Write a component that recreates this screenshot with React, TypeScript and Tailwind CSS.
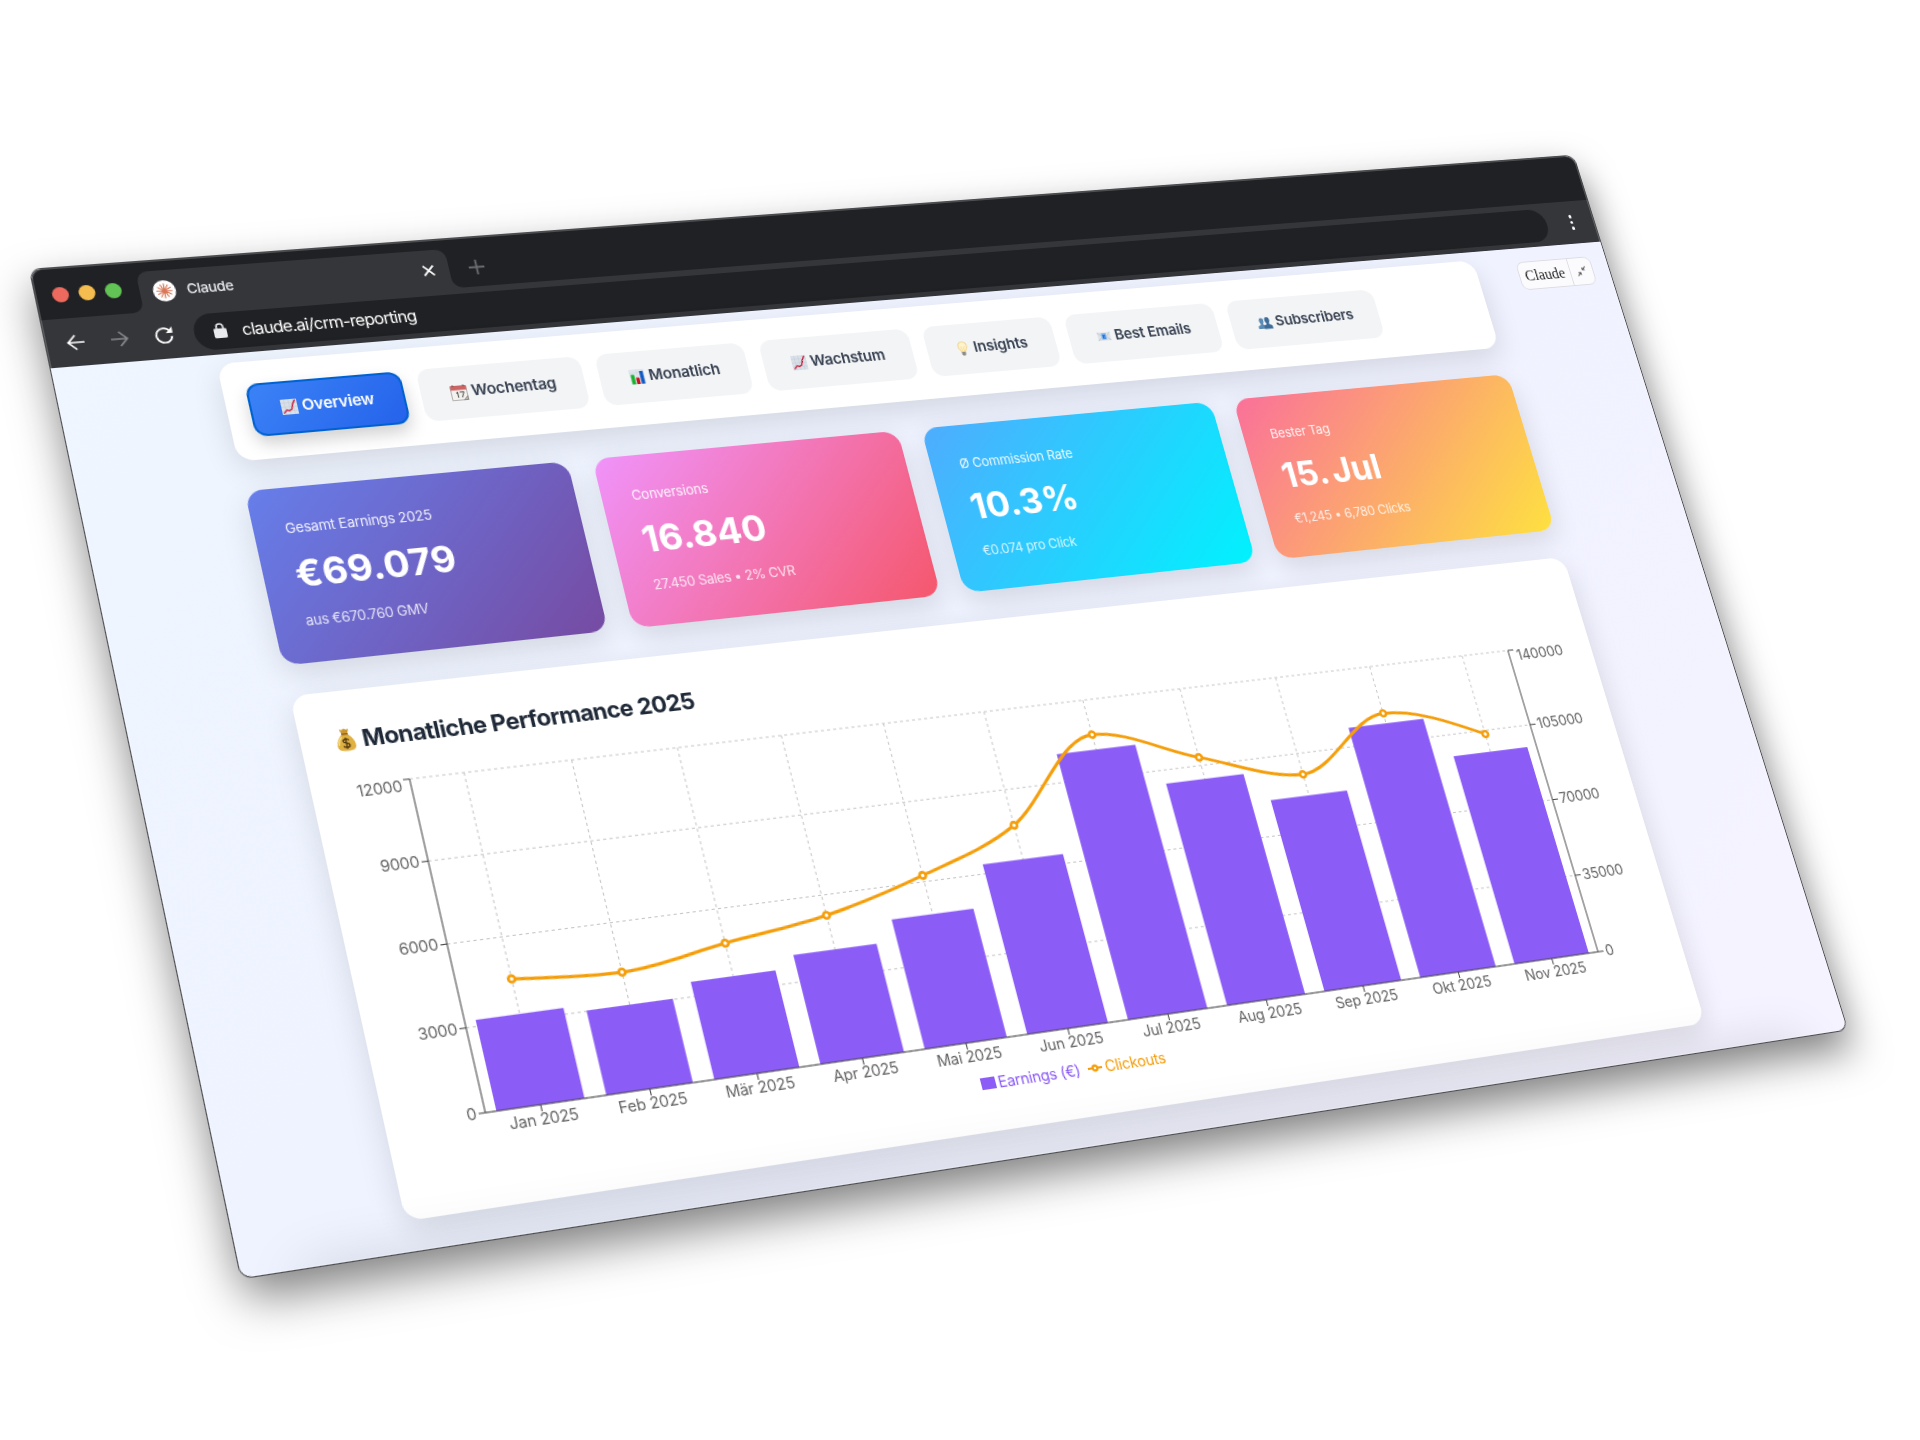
import { FC, ReactNode } from "react";

const WIDTH = 1582;
const HEIGHT = 937;

type Point = [number, number];

// screen corners of the tilted window: top left, top right, bottom right, bottom left
const corners: Point[] = [
  [30, 269.8],
  [1573.3, 155.6],
  [1847.3, 1029.5],
  [241.5, 1278.2],
];

const quadToMatrix = (w: number, h: number, [p0, p1, p2, p3]: Point[]) => {
  const dx1 = p1[0] - p2[0];
  const dy1 = p1[1] - p2[1];
  const dx2 = p3[0] - p2[0];
  const dy2 = p3[1] - p2[1];
  const sx = p0[0] - p1[0] + p2[0] - p3[0];
  const sy = p0[1] - p1[1] + p2[1] - p3[1];
  const det = dx1 * dy2 - dx2 * dy1;
  const g = (sx * dy2 - dx2 * sy) / det;
  const k = (dx1 * sy - sx * dy1) / det;
  const a = p1[0] - p0[0] + g * p1[0];
  const b = p3[0] - p0[0] + k * p3[0];
  const d = p1[1] - p0[1] + g * p1[1];
  const e = p3[1] - p0[1] + k * p3[1];
  const m = [
    a / w, d / w, 0, g / w,
    b / h, e / h, 0, k / h,
    0, 0, 1, 0,
    p0[0], p0[1], 0, 1,
  ];
  return `matrix3d(${m.map((n) => n.toFixed(10)).join(",")})`;
};

const ChartUp: FC = () => (
  <svg viewBox="0 0 16 16" className="size-[15px]">
    <rect width="16" height="16" rx="0.6" fill="#d9e0e8" />
    <path d="M0 4h16M0 8h16M0 12h16M4 0v16M8 0v16M12 0v16" stroke="#c3ccd6" strokeWidth="0.5" />
    <path
      d="M1.5 14.5 5 11l2 1.2 3-1.6 1.6-5.2L14.5 1"
      fill="none"
      stroke="#c8102e"
      strokeWidth="1.3"
      strokeLinejoin="round"
    />
  </svg>
);

const Calendar: FC = () => (
  <svg viewBox="0 0 16 16" className="size-[16px]">
    <path d="M.5 2h15v13.5H.5z" fill="#f4f2ef" stroke="#77706c" strokeWidth="0.5" />
    <path d="M.5 1h15v4.5H.5z" fill="#cc6464" />
    <path d="M3 .3v1.6M13 .3v1.6" stroke="#4a4441" strokeWidth="1" />
    <path d="M5 8.6 6.6 7.4V13M8.6 7.6h4L10.2 13" fill="none" stroke="#3b3b3b" strokeWidth="0.9" />
    <path d="M11.5 15.5 15.5 11.5v4z" fill="#b9b2ad" stroke="#55504d" strokeWidth="0.4" />
  </svg>
);

const BarsIcon: FC = () => (
  <svg viewBox="0 0 16 16" className="size-[15px]">
    <rect width="16" height="16" rx="0.6" fill="#dfe6ee" />
    <path d="M0 4h16M0 8h16M0 12h16M8 0v16" stroke="#cbd4de" strokeWidth="0.5" />
    <path d="M1.4 5.5H5V16H1.4z" fill="#14b32a" />
    <path d="M6.2 9h3.6v7H6.2z" fill="#c4161c" />
    <path d="M11 2h3.6v14H11z" fill="#1059c4" />
  </svg>
);

const Bulb: FC = () => (
  <svg viewBox="0 0 16 16" className="size-[15px]">
    <path d="M8 .6a4.8 4.8 0 0 0-4.8 4.9c0 2.6 2.2 3.6 2.6 6h4.4c.4-2.4 2.6-3.4 2.6-6A4.8 4.8 0 0 0 8 .6z" fill="#fdf3cc" stroke="#f0cf7a" strokeWidth="0.9" />
    <path d="M6.2 5.4 7.3 11M9.8 5.4 8.7 11" stroke="#f2c659" strokeWidth="0.5" />
    <path d="M5.9 11.6h4.2v2.6L9 15.6H7l-1.1-1.4z" fill="#8e8a86" />
  </svg>
);

const Mail: FC = () => (
  <svg viewBox="0 0 16 16" className="size-[15px]">
    <path d="M.8 3.4h14.4v9.4H.8z" fill="#dfe3e7" />
    <path d="M.8 3.4 6 8.2.8 12.8M15.2 3.4 10 8.2l5.2 4.6" fill="none" stroke="#b9c0c7" strokeWidth="0.7" />
    <path d="M5 4.2h5.6v7.6H5z" fill="#8dbdf3" />
    <path d="M9.6 6.6H6.8v3.2h2.8M6.8 8.2h2.4" fill="none" stroke="#1769d2" strokeWidth="1.1" />
  </svg>
);

const People: FC = () => (
  <svg viewBox="0 0 16 16" className="size-[16px]">
    <path d="M4.8 2.4c1.6 0 2.5 1.1 2.4 3-.1 1.5-.7 2.3-1 3v1.2l2 1.2V14H.4v-2.2c0-1 1.7-1.3 3-2V8.4c-.4-.7-1-1.5-1-3 0-1.9.8-3 2.4-3z" fill="#5b8ab2" />
    <path d="M11 2c1.7 0 2.7 1.2 2.6 3.2-.1 1.6-.8 2.4-1.1 3.1v1.3c1.3.7 3.2 1 3.2 2.2v2.7H6.6v-2.7c0-1.1 1.7-1.5 3-2.2V8.3c-.4-.7-1.1-1.5-1.2-3.1C8.3 3.2 9.3 2 11 2z" fill="#3c6c97" />
  </svg>
);

const MoneyBag: FC = () => (
  <svg viewBox="0 0 16 20" className="h-[22px] w-[18px]">
    <path d="M4.2.8 6.2 1.6 8 .5l1.8 1.1 2-.8-1.5 4.400H5.700z" fill="#c9962f" />
    <path d="M5.6 5.3h4.800c3 2.600 5.200 6.300 5.200 9.700 0 3.400-2.400 4.600-7.600 4.600S.4 18.400.4 15c0-3.400 2.200-7.100 5.200-9.700z" fill="#e0b040" />
    <path d="M5 7.5C3 9.500 1.800 12 1.800 14.600" fill="none" stroke="#f6dc84" strokeWidth="1.2" />
    <path d="M5.3 5.200h5.400" stroke="#7b4f12" strokeWidth="1.1" />
    <path d="M10.500 10.700c-.5-.9-1.400-1.200-2.500-1.200-1.400 0-2.400.6-2.400 1.700 0 2.400 5 1 5 3.600 0 1.200-1.200 1.800-2.600 1.800-1.300 0-2.300-.4-2.700-1.400M8 8.200v9.700" fill="none" stroke="#4a3510" strokeWidth="1.1" />
  </svg>
);

const tabs: { label: string; icon: ReactNode; width: string }[] = [
  { label: "Overview", icon: <ChartUp />, width: "w-[145px]" },
  { label: "Wochentag", icon: <Calendar />, width: "w-[157px]" },
  { label: "Monatlich", icon: <BarsIcon />, width: "w-[146px]" },
  { label: "Wachstum", icon: <ChartUp />, width: "w-[151px]" },
  { label: "Insights", icon: <Bulb />, width: "w-[133px]" },
  { label: "Best Emails", icon: <Mail />, width: "w-[158px]" },
  { label: "Subscribers", icon: <People />, width: "w-[161px]" },
];

const stats = [
  {
    label: "Gesamt Earnings 2025",
    value: "€69.079",
    sub: "aus €670.760 GMV",
    bg: "bg-[linear-gradient(135deg,#667eea_0%,#764ba2_100%)]",
  },
  {
    label: "Conversions",
    value: "16.840",
    sub: "27.450 Sales • 2% CVR",
    bg: "bg-[linear-gradient(135deg,#f093fb_0%,#f5576c_100%)]",
  },
  {
    label: "Ø Commission Rate",
    value: "10.3%",
    sub: "€0.074 pro Click",
    bg: "bg-[linear-gradient(135deg,#4facfe_0%,#00f2fe_100%)]",
  },
  {
    label: "Bester Tag",
    value: "15. Jul",
    sub: "€1,245 • 6,780 Clicks",
    bg: "bg-[linear-gradient(135deg,#fa709a_0%,#fee140_100%)]",
  },
];

const months = [
  { name: "Jan 2025", earnings: 3231, clickouts: 52340 },
  { name: "Feb 2025", earnings: 3026, clickouts: 49030 },
  { name: "Mär 2025", earnings: 3531, clickouts: 55270 },
  { name: "Apr 2025", earnings: 3991, clickouts: 61260 },
  { name: "Mai 2025", earnings: 4788, clickouts: 72760 },
  { name: "Jun 2025", earnings: 6353, clickouts: 89180 },
  { name: "Jul 2025", earnings: 10083, clickouts: 124380 },
  { name: "Aug 2025", earnings: 8478, clickouts: 108670 },
  { name: "Sep 2025", earnings: 7361, clickouts: 95510 },
  { name: "Okt 2025", earnings: 9737, clickouts: 118260 },
  { name: "Nov 2025", earnings: 8150, clickouts: 103320 },
];

// monotone cubic through the points, x ascending
const monotonePath = (pts: Point[]) => {
  const n = pts.length;
  const slope = (i: number) =>
    (pts[i + 1][1] - pts[i][1]) / (pts[i + 1][0] - pts[i][0]);
  const t: number[] = new Array(n).fill(0);
  for (let i = 1; i < n - 1; i++) {
    const s0 = slope(i - 1);
    const s1 = slope(i);
    const p = (s0 + s1) / 2;
    t[i] =
      (Math.sign(s0) + Math.sign(s1)) *
      Math.min(Math.abs(s0), Math.abs(s1), 0.5 * Math.abs(p));
  }
  t[0] = (3 * slope(0) - t[1]) / 2;
  t[n - 1] = (3 * slope(n - 2) - t[n - 2]) / 2;
  let d = `M${pts[0][0]},${pts[0][1]}`;
  for (let i = 0; i < n - 1; i++) {
    const dx = (pts[i + 1][0] - pts[i][0]) / 3;
    d += `C${pts[i][0] + dx},${pts[i][1] + dx * t[i]},${pts[i + 1][0] - dx},${
      pts[i + 1][1] - dx * t[i + 1]
    },${pts[i + 1][0]},${pts[i + 1][1]}`;
  }
  return d;
};

const Chart: FC = () => {
  const left = 60;
  const top = 5;
  const w = 1104;
  const h = 309;
  const bottom = top + h;
  const right = left + w;
  const band = w / months.length;
  const center = (i: number) => left + band * (i + 0.5);
  const points: Point[] = months.map((m, i) => [
    center(i),
    bottom - (m.clickouts / 140000) * h,
  ]);

  return (
    <svg width="1224" height="344" className="block shrink-0 overflow-visible text-[14.5px] tracking-[-0.2px]">
      <g stroke="#c6c6c6" strokeDasharray="3 3">
        {[0, 1, 2, 3, 4].map((i) => (
          <path key={i} d={`M${left} ${top + (h / 4) * i}H${right}`} />
        ))}
        {months.map((m, i) => (
          <path key={m.name} d={`M${center(i)} ${top}V${bottom}`} />
        ))}
      </g>
      {months.map((m, i) => (
        <rect
          key={m.name}
          x={left + band * (i + 0.1)}
          y={bottom - (m.earnings / 12000) * h}
          width={band * 0.8}
          height={(m.earnings / 12000) * h}
          fill="#8b5cf6"
        />
      ))}
      <path
        d={`M${left} ${top}V${bottom}H${right}V${top}`}
        fill="none"
        stroke="#444"
      />
      {[12000, 9000, 6000, 3000, 0].map((n, i) => (
        <g key={n}>
          <path d={`M${left - 6} ${top + (h / 4) * i}h6`} stroke="#444" />
          <text
            x={left - 8}
            y={top + (h / 4) * i + (i === 0 ? 11 : 5)}
            textAnchor="end"
            fill="#666"
          >
            {n}
          </text>
        </g>
      ))}
      {[140000, 105000, 70000, 35000, 0].map((n, i) => (
        <g key={n}>
          <path d={`M${right} ${top + (h / 4) * i}h6`} stroke="#444" />
          <text x={right + 8} y={top + (h / 4) * i + (i === 0 ? 11 : 5)} fill="#666">
            {n}
          </text>
        </g>
      ))}
      {months.map((m, i) => (
        <g key={m.name}>
          <path d={`M${center(i)} ${bottom}v6`} stroke="#444" />
          <text x={center(i)} y={bottom + 18} textAnchor="middle" fill="#666">
            {m.name}
          </text>
        </g>
      ))}
      <path d={monotonePath(points)} fill="none" stroke="#f59e0b" strokeWidth="3" />
      {points.map(([x, y]) => (
        <circle key={x} cx={x} cy={y} r="3" fill="#fff" stroke="#f59e0b" strokeWidth="2.6" />
      ))}
    </svg>
  );
};

const TabBar: FC = () => (
  <div className="flex h-[50px] shrink-0 items-end bg-[#202124] pl-[15px]">
    <div className="mb-[16px] flex gap-[9px]">
      <span className="size-[15px] rounded-full bg-[#ee6a5f]" />
      <span className="size-[15px] rounded-full bg-[#f5bd4f]" />
      <span className="size-[15px] rounded-full bg-[#61c454]" />
    </div>
    <div className="relative ml-[16px] flex h-[40px] w-[290px] items-center rounded-t-[10px] bg-[#35363a] pr-[13px] pl-[12px]">
      <svg viewBox="0 0 10 10" className="absolute bottom-0 -left-[10px] size-[10px]">
        <path d="M10 0v10H0A10 10 0 0 0 10 0z" fill="#35363a" />
      </svg>
      <svg viewBox="0 0 10 10" className="absolute -right-[10px] bottom-0 size-[10px]">
        <path d="M0 0v10h10A10 10 0 0 1 0 0z" fill="#35363a" />
      </svg>
      <span className="flex size-[21px] items-center justify-center rounded-full bg-white">
        <svg viewBox="0 0 20 20" className="size-[15px]">
          <path
            d="M10 10 10.3.8M10 10l4.6-7.4M10 10l8-4.2M10 10l9.2.3M10 10l7.8 4.8M10 10l4.2 7.8M10 10l-.4 9.2M10 10l-4.8 7.6M10 10l-7.8 4M10 10l-9.2-.4M10 10 2.6 5.2M10 10 6 2"
            stroke="#d97757"
            strokeWidth="1.5"
            strokeLinecap="round"
          />
        </svg>
      </span>
      <span className="ml-[10px] flex-1 text-[13.5px] font-medium tracking-[-0.4px] text-[#e8eaed]">
        Claude
      </span>
      <svg viewBox="0 0 12 12" className="size-[13px]">
        <path d="M1.5 1.5l9 9M10.5 1.5l-9 9" stroke="#fff" strokeWidth="1.7" />
      </svg>
    </div>
    <svg viewBox="0 0 14 14" className="mb-[12px] ml-[19px] size-[15px]">
      <path d="M7 0v14M0 7h14" stroke="#6b6d70" strokeWidth="1.7" />
    </svg>
  </div>
);

const Toolbar: FC = () => (
  <div className="flex h-[47px] shrink-0 items-center bg-[#35363a] pr-[24px] pl-[19px]">
    <svg viewBox="0 0 16 16" className="size-[16px]" fill="none" stroke="#fff" strokeWidth="1.7">
      <path d="M16 8H1.5M8.2 1l-7 7 7 7" />
    </svg>
    <svg viewBox="0 0 16 16" className="ml-[24px] size-[16px]" fill="none" stroke="#86888a" strokeWidth="1.7">
      <path d="M0 8h14.5M7.8 1l7 7-7 7" />
    </svg>
    <svg viewBox="0 0 16 16" className="ml-[24px] size-[17px]" fill="none">
      <path d="M13.6 5A6.7 6.7 0 1 0 14.6 9.6" stroke="#fff" strokeWidth="1.7" />
      <path d="M15.6.8v5.800H9.800z" fill="#fff" />
    </svg>
    <div className="ml-[19px] flex h-[36px] flex-1 items-center rounded-full bg-[#202124] pl-[18px]">
      <svg viewBox="0 0 12 15" className="h-[15px] w-[12px]">
        <path d="M3 6V4a3 3 0 0 1 6 0v2" fill="none" stroke="#e8eaed" strokeWidth="1.5" />
        <rect y="5.5" width="12" height="9.5" rx="1.4" fill="#e8eaed" />
      </svg>
      <span className="ml-[14px] text-[16px] tracking-[-0.7px] text-white">
        claude.ai/crm-reporting
      </span>
    </div>
    <div className="ml-[27px] flex flex-col gap-[3px]">
      <span className="size-[3.5px] rounded-full bg-white" />
      <span className="size-[3.5px] rounded-full bg-white" />
      <span className="size-[3.5px] rounded-full bg-white" />
    </div>
  </div>
);

const Legend: FC = () => (
  <div className="flex justify-center gap-[8px] pr-[10px] text-[14.5px] leading-[20px] tracking-[-0.3px]">
    <span className="flex items-center gap-[3px] text-[#8b5cf6]">
      <span className="h-[11px] w-[14px] bg-[#8b5cf6]" />
      Earnings (€)
    </span>
    <span className="flex items-center gap-[3px] text-[#f59e0b]">
      <svg viewBox="0 0 32 32" className="size-[14px]" fill="none" stroke="currentColor" strokeWidth="5">
        <path d="M0 16h10.7a5.3 5.3 0 1 1 10.6 0H32M21.3 16a5.3 5.3 0 1 1-10.6 0" />
      </svg>
      Clickouts
    </span>
  </div>
);

const App: FC = () => {
  return (
    <main className="h-[1440px] w-[1920px] overflow-hidden bg-white font-['Inter',sans-serif]">
      <div
        className="h-[937px] w-[1582px] origin-top-left rounded-[10px] shadow-[0_0_0_1px_#4c4d50,0_18px_40px_rgba(0,0,0,0.5)]"
        style={{ transform: quadToMatrix(WIDTH, HEIGHT, corners) }}
      >
        <div className="relative flex h-full w-full flex-col overflow-hidden rounded-[10px] bg-[linear-gradient(135deg,#eff6ff_0%,#eef2ff_50%,#f5f3ff_100%)]">
          <TabBar />
          <Toolbar />
          <section className="mx-auto flex w-[1284px] flex-col pt-[8.5px]">
            <nav className="flex h-[96px] items-center gap-[15.2px] rounded-[16px] bg-white pl-[21px] shadow-[0_10px_30px_rgba(0,0,0,0.12)]">
              {tabs.map((tab, i) => (
                <button
                  key={tab.label}
                  className={`${tab.width} flex h-[52px] items-center justify-center gap-[4px] rounded-[12px] text-[15px] font-semibold tracking-[-0.2px] whitespace-nowrap ${
                    i === 0
                      ? "border-2 border-[#0062d1] bg-[linear-gradient(135deg,#3b82f6,#2563eb)] text-white shadow-[0_8px_16px_rgba(0,0,0,0.18)]"
                      : "bg-[#f3f4f6] text-[#374151]"
                  }`}
                >
                  {tab.icon}
                  {tab.label}
                </button>
              ))}
            </nav>
            <div className="mt-[29px] grid grid-cols-4 gap-6">
              {stats.map((stat) => (
                <div
                  key={stat.label}
                  className={`${stat.bg} flex h-[168px] flex-col justify-between rounded-[16px] p-[29px] pt-7 text-white shadow-[0_10px_30px_rgba(0,0,0,0.12)]`}
                >
                  <p className="text-[13px] leading-[22px] tracking-[-0.2px] opacity-90">
                    {stat.label}
                  </p>
                  <p className="text-[36px] leading-9 font-bold [word-spacing:-4px]">
                    {stat.value}
                  </p>
                  <p className="text-[13px] leading-[22px] tracking-[-0.3px] opacity-80">
                    {stat.sub}
                  </p>
                </div>
              ))}
            </div>
            <div className="mt-[29px] flex h-[482px] flex-col rounded-[16px] bg-white px-[30px] pt-[30px] shadow-[0_10px_30px_rgba(0,0,0,0.12)]">
              <h2 className="flex h-[54px] items-start gap-[6px] pl-[2px] text-[22px] leading-[32px] font-bold tracking-[-0.6px] text-[#1f2937]">
                <span className="flex h-[32px] items-center">
                  <MoneyBag />
                </span>
                Monatliche Performance 2025
              </h2>
              <Chart />
              <Legend />
            </div>
          </section>
          {/* shadow of the section that starts below the fold */}
          <div className="absolute top-full right-[50px] left-[50px] h-10 shadow-[0_0_50px_rgba(0,0,0,0.13)]" />
          <div className="absolute top-[112px] right-[18px] flex h-[31px] w-[85px] items-center rounded-[8px] border border-[#dcdce2] bg-[#fbfbfe]">
            <span className="flex h-full w-[58px] items-center justify-center border-r border-[#dcdce2] font-['Liberation_Serif',serif] text-[16px] text-[#1f1e1d]">
              Claude
            </span>
            <svg viewBox="0 0 12 12" className="mx-auto size-[11px]" fill="none" stroke="#333" strokeWidth="1">
              <path d="M11.5.5 7.5 4.5M7.5 1.5v3h3M.5 11.5l4-4M1.5 7.5h3v3" />
            </svg>
          </div>
          <div className="pointer-events-none absolute inset-0 rounded-[10px] shadow-[inset_0_0_0_1px_rgba(255,255,255,0.2)]" />
        </div>
      </div>
    </main>
  );
};

export default App;
